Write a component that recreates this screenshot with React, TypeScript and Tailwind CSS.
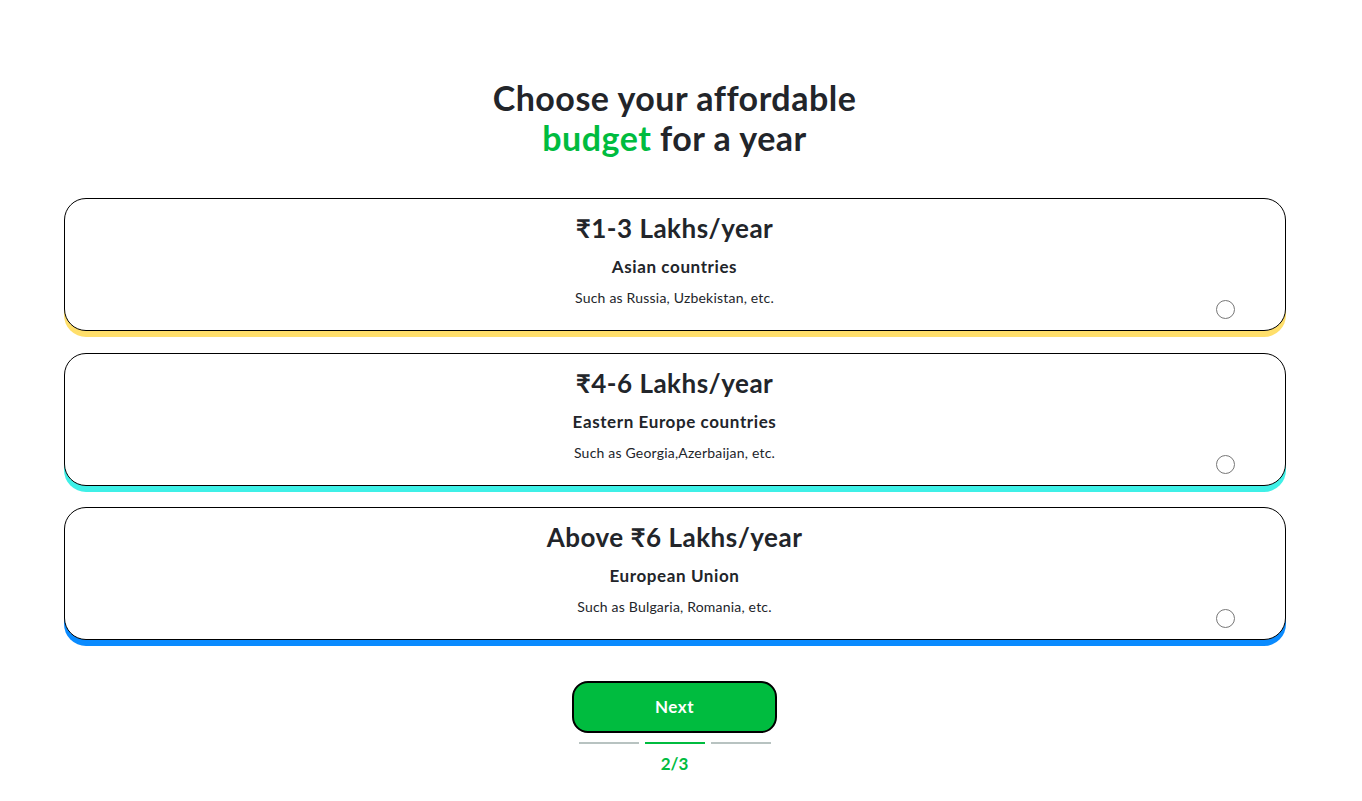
const plans = [
  {
    price: "₹1-3 Lakhs/year",
    region: "Asian countries",
    note: "Such as Russia, Uzbekistan, etc.",
    shadow: "shadow-[0_6px_0_0_#ffdf6b]",
  },
  {
    price: "₹4-6 Lakhs/year",
    region: "Eastern Europe countries",
    note: "Such as Georgia,Azerbaijan, etc.",
    shadow: "shadow-[0_6px_0_0_#3ff0e7]",
  },
  {
    price: "Above ₹6 Lakhs/year",
    region: "European Union",
    note: "Such as Bulgaria, Romania, etc.",
    shadow: "shadow-[0_6px_0_0_#0a8bff]",
  },
];

export default function App() {
  return (
    <div className="min-h-screen bg-white pr-[13px] font-['Lato','Noto_Sans',sans-serif] text-[#22252a]">
      <div className="flex flex-col items-center pt-[78px]">
        <h1 className="text-center text-[34px] font-bold leading-[40px] tracking-[0.5px]">
          Choose your affordable
          <br />
          <span className="text-[#00bc3f]">budget</span> for a year
        </h1>

        <div className="mt-[40px] flex w-[1222px] flex-col gap-[21.5px]">
          {plans.map((p) => (
            <label
              key={p.price}
              className={`relative flex h-[133px] cursor-pointer flex-col items-center rounded-[22px] border border-black bg-white pt-[12px] ${p.shadow}`}
            >
              <div className="text-[26px] font-bold leading-[34px] tracking-[0.5px]">{p.price}</div>
              <div className="mt-[11px] text-[17px] font-bold leading-[22px] tracking-[0.6px]">{p.region}</div>
              <div className="mt-[11px] text-[14px] leading-[18px] tracking-[0.2px]">{p.note}</div>
              <span className="absolute right-[50px] bottom-[11px] h-[19px] w-[19px] rounded-full border border-[#777]" />
            </label>
          ))}
        </div>

        <button className="mt-[41px] h-[52px] w-[205px] rounded-[16px] border-2 border-black bg-[#00bc3f] text-[17px] font-bold tracking-[0.5px] text-white">
          Next
        </button>

        <div className="mt-[9px] flex gap-[6px]">
          <div className="h-[2px] w-[60px] bg-[#b8c3c1]" />
          <div className="h-[2px] w-[60px] bg-[#00bc3f]" />
          <div className="h-[2px] w-[60px] bg-[#b8c3c1]" />
        </div>
        <div className="mt-[7px] text-[17px] font-bold text-[#00bc3f]">2/3</div>
      </div>
    </div>
  );
}
